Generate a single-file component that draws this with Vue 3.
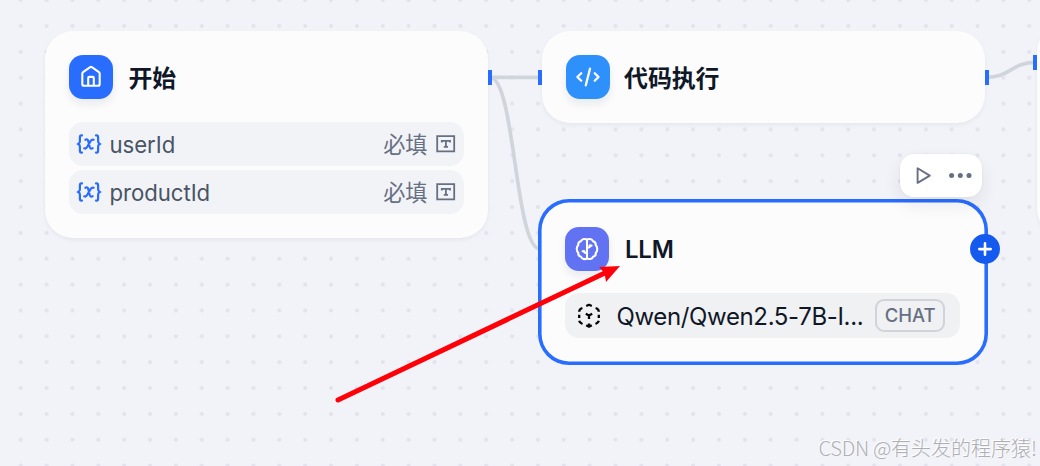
<script setup>
// Start node inputs
const variables = [
    { name: "userId", hint: "必填" },
    { name: "productId", hint: "必填" },
];

const model = { name: "Qwen/Qwen2.5-7B-I...", mode: "CHAT" };
</script>

<template>
    <div class="canvas">
        <svg class="layer" width="1040" height="466">
            <defs>
                <pattern id="dots" x="7.8" y="-12.8" width="25.86" height="25.86" patternUnits="userSpaceOnUse">
                    <circle cx="12.93" cy="12.93" r="2" fill="#e1e2ec" />
                </pattern>
            </defs>
            <rect width="1040" height="466" fill="url(#dots)" />
            <g fill="none" stroke="#d0d5dc" stroke-width="3.7">
                <path d="M490 77.3H540" />
                <path d="M490 77.3C515 77.3 515 249 540 249" />
                <path d="M986 77.3C1011 77.3 1011 62.3 1036 62.3" />
            </g>
        </svg>

        <!-- Start -->
        <section class="node node--start">
            <header class="node-header">
                <span class="node-icon node-icon--start">
                    <svg width="44" height="44" viewBox="0 0 44 44" fill="none" stroke="#fff" stroke-width="2.1" stroke-linejoin="round">
                        <path d="M13.3 18.6Q13.3 17.8 14 17.2L21.2 12.1Q22 11.6 22.8 12.1L30 17.2Q30.7 17.8 30.7 18.6V28.9Q30.7 30.7 28.9 30.7H15.1Q13.3 30.7 13.3 28.9Z" />
                        <path d="M19.2 30.5V23Q19.2 21.9 20.3 21.9H23.7Q24.8 21.9 24.8 23V30.5" />
                    </svg>
                </span>
                <h3 class="node-title node-title--cjk">开始</h3>
            </header>
            <div class="var-list">
                <div v-for="item in variables" :key="item.name" class="var-row">
                    <svg class="var-icon" width="26" height="22" viewBox="0 0 26 22" fill="none" stroke="#296dff" stroke-width="2.2" stroke-linecap="round">
                        <path d="M6 2.4H5.4Q3.9 2.4 3.9 4.2V8.2Q3.9 10 2.3 11Q3.9 12 3.9 13.8V17.8Q3.9 19.6 5.4 19.6H6" />
                        <path d="M20 2.4H20.6Q22.1 2.4 22.1 4.2V8.2Q22.1 10 23.7 11Q22.1 12 22.1 13.8V17.8Q22.1 19.6 20.6 19.6H20" />
                        <path d="M9.4 6.8Q11.6 5.7 12.3 8.2L13.7 13.8Q14.4 16.3 16.6 15.2M17.6 6.7Q16 6 14.5 8.2L11.3 13.8Q9.9 16.2 8.2 15.3" />
                    </svg>
                    <span class="var-name">{{ item.name }}</span>
                    <span class="var-hint">{{ item.hint }}</span>
                    <svg width="20" height="18" viewBox="0 0 20 18" fill="none" stroke="#676f83" stroke-width="1.8">
                        <path d="M1.2 1.2H18.2V16.4H1.2Z" />
                        <path d="M5.8 7.4V5.8H14V7.4M9.9 5.8V11.9M7.8 11.9H12" />
                    </svg>
                </div>
            </div>
        </section>

        <!-- Code -->
        <section class="node node--code">
            <header class="node-header">
                <span class="node-icon node-icon--code">
                    <svg width="44" height="44" viewBox="0 0 44 44" fill="none" stroke="#fff" stroke-width="2.3" stroke-linecap="round" stroke-linejoin="round">
                        <path d="M15.2 18.2L11.4 22L15.2 25.8M28.7 18.2L32.5 22L28.7 25.8M24 13.7L19.8 30.3" />
                    </svg>
                </span>
                <h3 class="node-title node-title--cjk">代码执行</h3>
            </header>
        </section>

        <!-- LLM -->
        <section class="node node--llm">
            <header class="node-header">
                <span class="node-icon node-icon--llm">
                    <svg width="44" height="44" viewBox="0 0 44 44" fill="none" stroke="#fff" stroke-width="2.1" stroke-linecap="round" stroke-linejoin="round">
                        <path d="M22 12.8Q20.8 11.7 18.7 12Q16.6 12.4 16 14.2Q12.9 14.8 13.2 18.3Q11.6 19.8 11.8 22Q11.8 24.4 13.3 25.8Q13 29.2 16.1 29.8Q16.9 31.8 19 32.1Q21 32.3 22 31.2Q23.2 32.3 25.2 32Q27.4 31.6 28 29.8Q31.1 29.2 30.8 25.8Q32.4 24.2 32.2 22Q32.3 19.7 30.8 18.3Q31 14.9 28 14.2Q27.3 12.3 25.2 12Q23.2 11.7 22 12.8ZM22 13V31" />
                        <path d="M22 20.8Q25 20.8 25.4 18.6M22 26.3Q19.3 26.1 18.6 24.2" />
                        <path d="M26.6 18.6H24.6M17.6 24.2H19.4" />
                    </svg>
                </span>
                <h3 class="node-title">LLM</h3>
            </header>
            <div class="model-row">
                <svg width="26" height="26" viewBox="0 0 26 26" fill="none" stroke="#050505" stroke-width="2.3" stroke-linejoin="round">
                    <path d="M10.2 3L13 1.8L15.8 3M6.4 5Q3.2 6 3.2 8.7M19.6 5Q22.8 6 22.8 8.7M3.2 11.8V14.9M22.8 11.8V14.9M3.2 17.7Q3.6 19.8 6.5 21M22.8 17.7Q22.4 19.8 19.5 21M10.2 22.2L13 23.7L15.8 22.2M13 20.4V24M9.8 10.8L13 12.5L16.2 10.8M13 12.5V16" />
                </svg>
                <span class="model-name">{{ model.name }}</span>
                <span class="model-mode">{{ model.mode }}</span>
            </div>
        </section>

        <!-- Next node, cut off by the viewport -->
        <section class="node node--next"></section>

        <i class="port port--start-out"></i>
        <i class="port port--code-in"></i>
        <i class="port port--code-out"></i>
        <i class="port port--next-in"></i>

        <div class="toolbar">
            <svg width="18" height="20" viewBox="0 0 18 20" fill="none" stroke="#676f83" stroke-width="1.9" stroke-linejoin="round">
                <path d="M2.6 2.3V16.9L14.8 9.6Z" />
            </svg>
            <svg width="24" height="6" viewBox="0 0 24 6" fill="#676f83">
                <circle cx="2.6" cy="2.6" r="2.5" />
                <circle cx="11.3" cy="2.6" r="2.5" />
                <circle cx="20" cy="2.6" r="2.5" />
            </svg>
        </div>

        <div class="add-button">
            <svg width="30" height="30" viewBox="0 0 30 30" fill="none" stroke="#fff" stroke-width="2.6" stroke-linecap="round">
                <path d="M15 9.4V20.8M9.3 15.1H20.7" />
            </svg>
        </div>

        <svg class="layer" width="1040" height="466">
            <path d="M338 400L608 271.5" stroke="#ff0008" stroke-width="5" stroke-linecap="round" />
            <path d="M620 266L599 267L604.5 273L606 282Z" fill="#ff0008" />
        </svg>

        <div class="watermark"><span class="watermark-site">CSDN @</span>有头发的程序猿!</div>
    </div>
</template>

<style>
body {
    margin: 0;
    overflow: hidden;
}
</style>

<style scoped>
.canvas {
    position: relative;
    width: 1040px;
    height: 466px;
    overflow: hidden;
    background: #f2f3f8;
    font-family: Inter, "Noto Sans CJK SC", sans-serif;
}

.canvas svg {
    display: block;
    flex-shrink: 0;
}

.layer {
    position: absolute;
    top: 0;
    left: 0;
}

/* Nodes on the free canvas */
.node {
    position: absolute;
    box-sizing: border-box;
    width: 443.5px;
    padding: 24px;
    border-radius: 28px;
    background: #fcfcfd;
    box-shadow: 0 2px 4px rgba(16, 24, 40, 0.05);
}

.node--start {
    left: 45px;
    top: 31px;
    width: 443px;
    height: 207px;
}

.node--code {
    left: 541.6px;
    top: 31px;
    width: 443px;
    height: 92.4px;
}

.node--llm {
    left: 538px;
    top: 199.3px;
    width: 450px;
    height: 166px;
    padding: 28px 27.4px;
    border-radius: 31px;
    box-shadow: inset 0 0 0 3.6px #296dff;
}

.node--next {
    left: 1037px;
    top: 24px;
    height: 213px;
}

.node-header {
    display: flex;
    align-items: center;
    gap: 15.5px;
    height: 44px;
}

.node-icon {
    width: 44px;
    height: 44px;
    border-radius: 14px;
    box-shadow: 0 5px 9px rgba(16, 24, 40, 0.08);
}

.node-icon--start {
    background: #296dff;
}

.node-icon--code {
    background: #2e90fa;
}

.node-icon--llm {
    background: #6172f3;
}

.node-title {
    margin: 0;
    padding-top: 2px;
    font-size: 24px;
    font-weight: 600;
    line-height: 44px;
    letter-spacing: -0.2px;
    color: #101828;
}

.node-title--cjk {
    padding-top: 4px;
    font-size: 23.9px;
    letter-spacing: -0.1px;
}

.node--code .node-title {
    margin-left: -1px;
}

.var-list {
    display: grid;
    gap: 4px;
    margin-top: 23px;
}

.var-row {
    display: flex;
    align-items: center;
    box-sizing: border-box;
    height: 44px;
    padding: 0 8px 0 7px;
    border-radius: 14px;
    background: #f2f3f7;
    font-size: 22.2px;
}

.var-name {
    flex: 1;
    margin-left: 7.5px;
    padding-top: 1px;
    letter-spacing: -0.05px;
    color: #495464;
}

.var-hint {
    margin-right: 8.5px;
    padding-bottom: 3px;
    color: #676f83;
}

.model-row {
    display: flex;
    align-items: center;
    box-sizing: border-box;
    width: 395px;
    height: 44.5px;
    margin-top: 22px;
    padding: 0 15px 0 11px;
    border-radius: 14px;
    background: #f0f1f3;
}

.model-name {
    flex: 1;
    margin-left: 14px;
    padding-top: 2px;
    font-size: 24px;
    letter-spacing: -0.35px;
    white-space: nowrap;
    color: #101828;
}

.model-mode {
    box-sizing: border-box;
    width: 70.5px;
    height: 33px;
    border: 2px solid #d0d3d9;
    border-radius: 9px;
    font-size: 18.5px;
    font-weight: 500;
    line-height: 29px;
    text-align: center;
    color: #676f83;
}

.port {
    position: absolute;
    width: 4px;
    height: 15px;
    background: #296dff;
}

.port--start-out {
    left: 488px;
    top: 70px;
}

.port--code-in {
    left: 538px;
    top: 70px;
}

.port--code-out {
    left: 984.6px;
    top: 70px;
}

.port--next-in {
    left: 1033px;
    top: 55px;
}

.toolbar {
    position: absolute;
    left: 900px;
    top: 154px;
    display: flex;
    align-items: center;
    gap: 16px;
    box-sizing: border-box;
    width: 82px;
    height: 43px;
    padding-left: 15px;
    border-radius: 14px;
    background: #fff;
    box-shadow: 0 8px 18px rgba(16, 24, 40, 0.08), 0 0 2px rgba(16, 24, 40, 0.08);
}

.add-button {
    position: absolute;
    left: 969.6px;
    top: 234px;
    width: 30px;
    height: 30px;
    border-radius: 50%;
    background: #155aef;
}

.watermark {
    position: absolute;
    right: 3px;
    bottom: 3.5px;
    font-family: "Noto Sans CJK SC", sans-serif;
    font-size: 20px;
    font-weight: 300;
    line-height: 30px;
    white-space: nowrap;
    color: #aeafb2;
    text-shadow: -1px -1px 0 #fff;
}

.watermark-site {
    letter-spacing: -0.2px;
}
</style>
